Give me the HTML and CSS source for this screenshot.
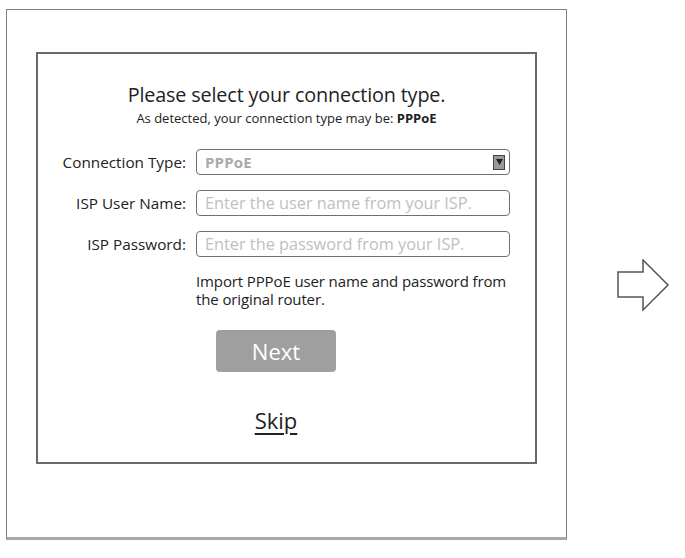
FILE: index.html
```html
<!DOCTYPE html>
<html lang="en">
<head>
<meta charset="utf-8">
<title>Connection type</title>
<link rel="stylesheet" href="styles.css">
</head>
<body>
<div class="page">
  <div class="frame">
    <div class="panel">
      <h1 class="title">Please select your connection type.</h1>
      <p class="detected">As detected, your connection type may be: <b>PPPoE</b></p>
      <div class="form">
        <label class="label">Connection Type:</label>
        <div class="select">
          <span class="select-value">PPPoE</span>
          <span class="select-btn"><svg width="7" height="6" viewBox="0 0 7 6"><path d="M0 0H7L3.5 6Z" fill="#222"/></svg></span>
        </div>
        <label class="label">ISP User Name:</label>
        <div class="input">Enter the user name from your ISP.</div>
        <label class="label">ISP Password:</label>
        <div class="input">Enter the password from your ISP.</div>
        <span></span>
        <p class="note">Import PPPoE user name and password from the original router.</p>
        <span></span>
        <div class="actions">
          <button class="next">Next</button>
          <a class="skip">Skip</a>
        </div>
      </div>
    </div>
  </div>
  <svg class="arrow" width="54" height="54" viewBox="0 0 54 54">
    <path d="M1 13H26V1L51 26L26 51V38H1Z" fill="#fff" stroke="#555" stroke-width="1.5" stroke-linejoin="miter"/>
  </svg>
</div>
</body>
</html>
```
FILE: styles.css
```css
* { box-sizing: border-box; }
html, body { margin: 0; padding: 0; background: #fff; }
body { font-family: "Open Sans", "Noto Sans", sans-serif; color: #222; }
.page {
  display: flex;
  align-items: flex-start;
  padding: 9px 0 0 6px;
}
.frame {
  width: 561px;
  height: 531px;
  border: 1.5px solid #808080;
  border-bottom: 3px solid #a8a8a8;
  padding: 42px 0 0 29px;
}
.panel {
  width: 501px;
  height: 412px;
  border: 2px solid #6a6a6a;
  padding-top: 27px;
}
.title {
  margin: 0;
  text-align: center;
  font-weight: 400;
  font-size: 19.8px;
  line-height: 28px;
  color: #222;
  letter-spacing: -0.15px;
}
.detected {
  margin: 0;
  text-align: center;
  font-size: 13px;
  line-height: 18px;
  color: #222;
}
.detected b { font-weight: 700; }
.form {
  display: grid;
  grid-template-columns: 148px 314px;
  column-gap: 10px;
  row-gap: 15px;
  margin-top: 22px;
  align-items: center;
}
.label {
  text-align: right;
  font-size: 15.3px;
  color: #222;
  white-space: nowrap;
}
.select, .input {
  height: 26px;
  border: 1.5px solid #707070;
  border-radius: 4px;
  display: flex;
  align-items: center;
  padding-left: 8px;
  font-size: 16.3px;
  color: #b8b8b8;
  white-space: nowrap;
}
.select { justify-content: space-between; padding-right: 4px; }
.select-value { font-weight: 700; color: #aaa; font-size: 15px; letter-spacing: 0.2px; }
.select-btn {
  width: 12px;
  height: 15px;
  background: #9a9a9a;
  border: 1px solid #444;
  display: flex;
  align-items: center;
  justify-content: center;
}
.input { color: #c0c0c0; }
.note {
  margin: 0;
  width: 318px;
  font-size: 15px;
  line-height: 18px;
  letter-spacing: -0.12px;
  color: #222;
}
.actions {
  display: flex;
  flex-direction: column;
  align-items: center;
  width: 160px;
  margin-top: 7px;
}
.next {
  width: 120px;
  height: 42px;
  border: none;
  border-radius: 4px;
  background: #9f9f9f;
  color: #fff;
  font-family: "Open Sans", sans-serif;
  font-size: 22px;
  padding: 0;
}
.skip {
  margin-top: 33px;
  font-size: 22px;
  line-height: 30px;
  color: #222;
  text-decoration: underline;
  text-decoration-thickness: 1.5px;
  text-underline-offset: 4px;
}
.arrow { margin: 250px 0 0 50px; }
```
